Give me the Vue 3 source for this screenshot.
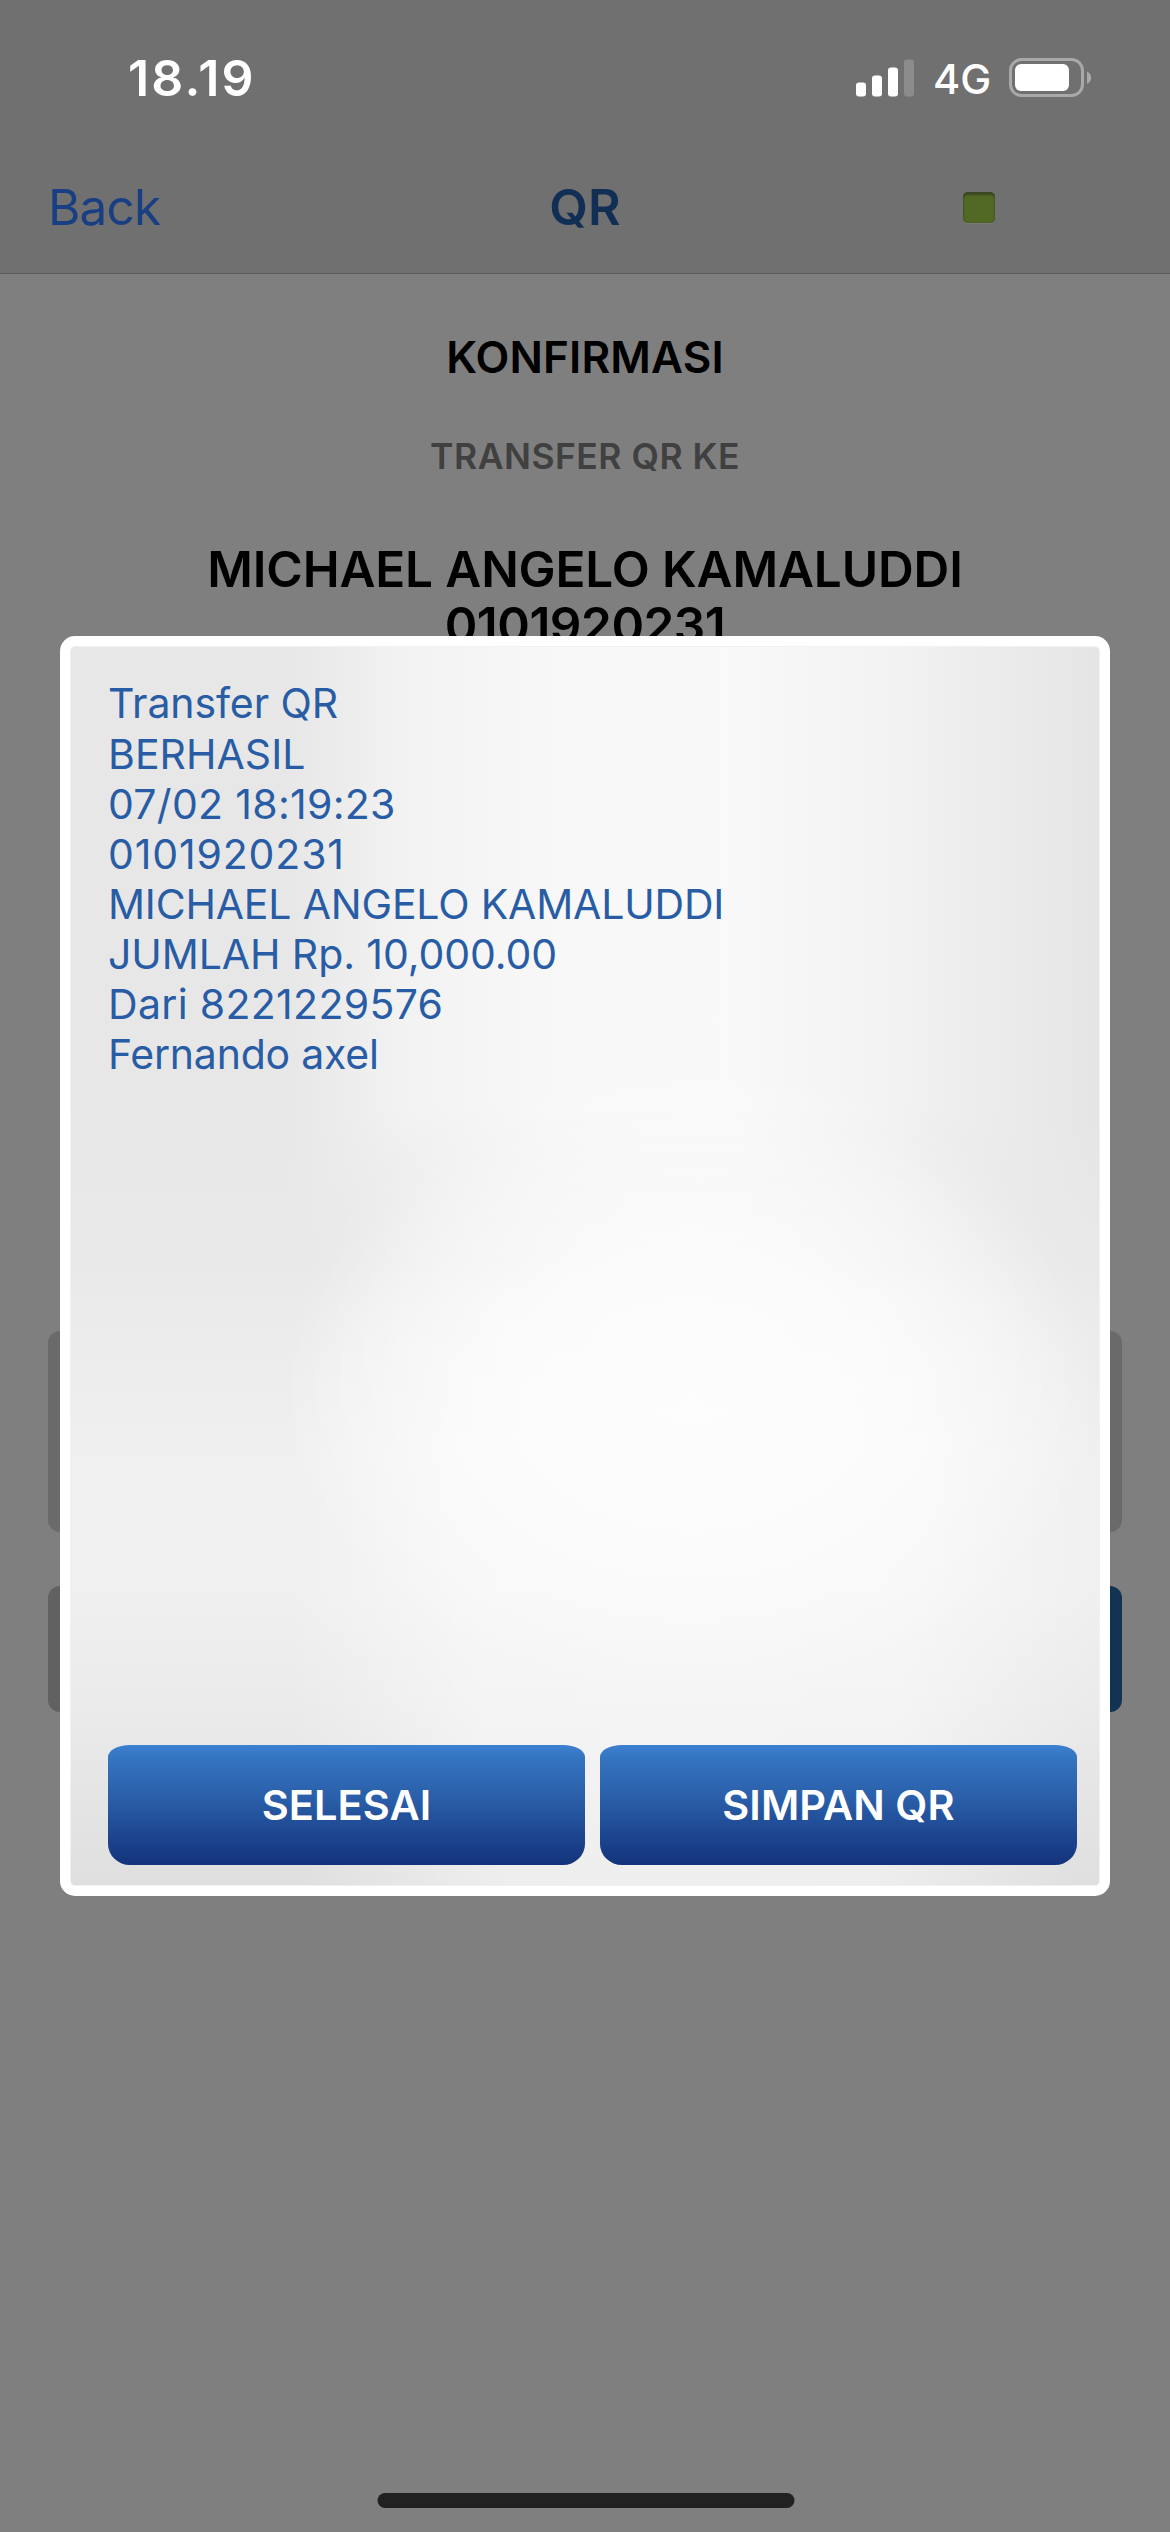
<script setup>
const receipt = [
  { text: 'Transfer QR', kind: 'r1' },
  { text: 'BERHASIL', kind: 'r2' },
  { text: '07/02 18:19:23', kind: 'r3' },
  { text: '0101920231', kind: 'r4' },
  { text: 'MICHAEL ANGELO KAMALUDDI', kind: 'r5' },
  { text: 'JUMLAH Rp. 10,000.00', kind: 'r6' },
  { text: 'Dari 8221229576', kind: 'r7' },
  { text: 'Fernando axel', kind: 'r8' },
]
</script>

<template>
  <div class="screen">
    <header class="header">
      <div class="status">
        <span class="time">18.19</span>
        <div class="indicators">
          <svg class="signal" width="58" height="38" viewBox="0 0 58 38">
            <rect x="0" y="23.5" width="10" height="14" rx="3" fill="#fff" />
            <rect x="16" y="16.5" width="10" height="21" rx="3" fill="#fff" />
            <rect x="32" y="8.5" width="10" height="29" rx="3" fill="#fff" />
            <rect x="48" y="0.5" width="10" height="37" rx="3" fill="#8c8c8c" />
          </svg>
          <span class="network">4G</span>
          <svg class="battery" width="83" height="40" viewBox="0 0 83 40">
            <rect x="1.5" y="1.5" width="72" height="36" rx="11" fill="none" stroke="#a9a9a9" stroke-width="3" />
            <rect x="6" y="6" width="54" height="27" rx="6" fill="#fff" />
            <path d="M78 13.5v12.6c2.400-1 4.200-3.400 4.200-6.300s-1.800-5.300-4.200-6.300z" fill="#a9a9a9" />
          </svg>
        </div>
      </div>
      <nav class="navbar">
        <span class="back">Back</span>
        <span class="title">QR</span>
        <span class="lamp-cell"><i class="lamp"></i></span>
      </nav>
    </header>

    <main class="page">
      <h1 class="confirm">KONFIRMASI</h1>
      <p class="caption">TRANSFER QR KE</p>
      <p class="payee">MICHAEL ANGELO KAMALUDDI</p>
      <p class="account">0101920231</p>
      <div class="field"></div>
      <div class="actions">
        <div class="action cancel"></div>
        <div class="action submit"></div>
      </div>
    </main>

    <div class="home-bar"></div>

    <section class="modal">
      <div class="panel">
        <div class="receipt">
          <div v-for="line in receipt" :key="line.kind" class="line"><span :class="line.kind">{{ line.text }}</span></div>
        </div>
        <div class="buttons">
          <button class="btn">SELESAI</button>
          <button class="btn">SIMPAN QR</button>
        </div>
      </div>
    </section>
  </div>
</template>

<style>
body {
  margin: 0;
  background: #7f7f7f;
}
</style>

<style scoped>
.screen {
  position: relative;
  display: flex;
  flex-direction: column;
  box-sizing: border-box;
  width: 1170px;
  height: 2532px;
  overflow: hidden;
  background: #7f7f7f;
  font-family: Inter, "Liberation Sans", sans-serif;
  white-space: nowrap;
}
.header {
  box-sizing: border-box;
  height: 274px;
  background: #707070;
  border-bottom: 1px solid #59595b;
}
.status {
  display: flex;
  justify-content: space-between;
  box-sizing: border-box;
  height: 141px;
  padding: 48px 78px 0 128px;
  color: #fff;
}
.time {
  font-size: 50px;
  font-weight: 600;
  letter-spacing: 2.200px;
  line-height: 60px;
}
.indicators {
  display: flex;
  align-items: flex-start;
}
.signal {
  margin-top: 10.500px;
}
.network {
  margin-left: 19px;
  width: 76px;
  font-size: 41.500px;
  font-weight: 500;
  line-height: 62px;
}
.battery {
  margin-top: 10px;
}
.navbar {
  display: grid;
  grid-template-columns: 1fr 1fr 1fr;
  align-items: center;
  height: 132px;
  padding: 0 48px;
}
.back {
  color: #193f82;
  font-size: 49.500px;
  letter-spacing: -0.800px;
}
.title {
  color: #112f54;
  font-size: 50px;
  font-weight: 600;
  text-align: center;
}
.lamp-cell {
  padding-left: 199px;
  line-height: 0;
}
.lamp {
  display: inline-block;
  width: 32px;
  height: 31px;
  border-radius: 5px;
  background: #526925;
  box-shadow: inset 0 3px 2px #3c4823, inset 0 0 2px #3c4b22, 0 1px 0 #787878;
}
.page {
  display: flex;
  flex-direction: column;
  padding: 53px 48px 0;
  text-align: center;
}
.page h1,
.page p {
  margin: 0;
}
.confirm {
  height: 60px;
  color: #000;
  font-size: 44px;
  font-weight: 600;
  letter-spacing: 0.150px;
  line-height: 60px;
}
.page .caption {
  margin-top: 50px;
  color: #404040;
  font-size: 35.500px;
  font-weight: 600;
  letter-spacing: 0.500px;
  line-height: 40px;
}
.payee,
.account {
  color: #000;
  font-size: 49.500px;
  font-weight: 600;
  letter-spacing: -0.150px;
  line-height: 56px;
}
.account {
  letter-spacing: -0.500px;
}
.page .payee {
  margin-top: 64px;
}
.field {
  height: 201px;
  margin-top: 678px;
  border-radius: 12px;
  background: #6a6a6a;
}
.actions {
  display: flex;
  gap: 24px;
  margin-top: 54px;
}
.action {
  flex: 1;
  height: 126px;
  border-radius: 12px;
}
.cancel {
  background: #616161;
}
.submit {
  background: #123452;
}
.home-bar {
  width: 417px;
  height: 15px;
  margin: auto auto 24px;
  transform: translateX(0.5px);
  border-radius: 8px;
  background: #212121;
}
.modal {
  position: absolute;
  top: 636px;
  left: 60px;
  box-sizing: border-box;
  width: 1050px;
  height: 1260px;
  padding: 10px;
  border-radius: 15px;
  background: #fff;
}
.panel {
  display: flex;
  flex-direction: column;
  justify-content: space-between;
  box-sizing: border-box;
  height: 1240px;
  padding: 31px 22px 20px 37px;
  border: 1px solid #f1f1f1;
  border-radius: 5px;
  background:
    radial-gradient(ellipse 410px 320px at 620px 735px, rgba(255, 255, 255, 0.72), rgba(255, 255, 255, 0.62) 40%, rgba(255, 255, 255, 0.34) 72%, rgba(255, 255, 255, 0) 100%),
    radial-gradient(ellipse 410px 300px at 620px 100%, rgba(255, 255, 255, 0.5), rgba(255, 255, 255, 0.46) 55%, rgba(255, 255, 255, 0) 100%) 0 454px / 100% 300px no-repeat,
    radial-gradient(ellipse 410px 1500px at 620px 0, rgba(255, 255, 255, 0.5), rgba(255, 255, 255, 0.46) 55%, rgba(255, 255, 255, 0) 100%) 0 754px / 100% 486px no-repeat,
    linear-gradient(rgba(231, 231, 231, 0), #e9e9e9 20%, #f0f0f0 45%, #f0f0f0 62%, #ebebeb 76%, #dfdfdf 100%) 0 460px / 100% 780px no-repeat,
    linear-gradient(90deg, #e7e7e7 0, #e7e7e7 21%, #f2f2f2 32%, #f8f8f8 47%, #f9f9f9 64%, #f2f2f2 80%, #e5e5e5 100%);
}
.line {
  height: 50px;
  color: #285ca5;
  font-size: 41px;
  line-height: 50px;
}
.line:first-child {
  height: 51px;
}
.r1 { letter-spacing: -0.100px; }
.r2 { letter-spacing: 0.050px; }
.r3 { letter-spacing: 0.300px; }
.r4 { letter-spacing: 0.850px; }
.r5 { letter-spacing: -0.180px; }
.r6 { letter-spacing: -0.080px; }
.r7 { letter-spacing: 0.320px; }
.r8 { letter-spacing: -0.230px; }
.buttons {
  display: flex;
  gap: 15px;
}
.btn {
  flex: 1;
  height: 120px;
  padding: 0;
  border: 0;
  border-radius: 22px / 12px 12px 21px 21px;
  background: linear-gradient(#3c80d0, #3473bf 12%, #2a5ea8 45%, #1d458f 76%, #13347c);
  color: #fff;
  font: 600 41.500px/120px Inter, "Liberation Sans", sans-serif;
  letter-spacing: 0.100px;
}
</style>
